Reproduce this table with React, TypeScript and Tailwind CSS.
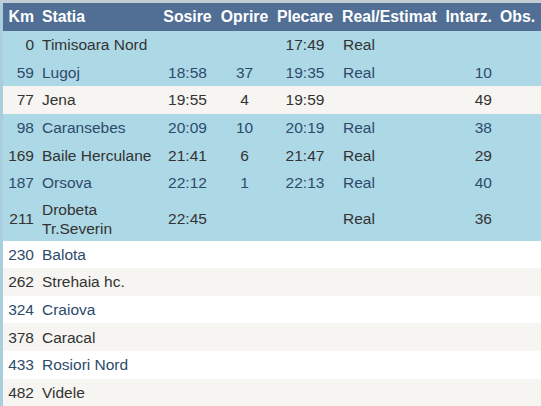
const rows = [
  { km: '0', name: 'Timisoara Nord', sosire: '', oprire: '', plecare: '17:49', real: 'Real', intarz: '', hl: true },
  { km: '59', name: 'Lugoj', sosire: '18:58', oprire: '37', plecare: '19:35', real: 'Real', intarz: '10', hl: true },
  { km: '77', name: 'Jena', sosire: '19:55', oprire: '4', plecare: '19:59', real: '', intarz: '49', hl: false },
  { km: '98', name: 'Caransebes', sosire: '20:09', oprire: '10', plecare: '20:19', real: 'Real', intarz: '38', hl: true },
  { km: '169', name: 'Baile Herculane', sosire: '21:41', oprire: '6', plecare: '21:47', real: 'Real', intarz: '29', hl: true },
  { km: '187', name: 'Orsova', sosire: '22:12', oprire: '1', plecare: '22:13', real: 'Real', intarz: '40', hl: true },
  { km: '211', name: 'Drobeta Tr.Severin', sosire: '22:45', oprire: '', plecare: '', real: 'Real', intarz: '36', hl: true },
  { km: '230', name: 'Balota', sosire: '', oprire: '', plecare: '', real: '', intarz: '', hl: false },
  { km: '262', name: 'Strehaia hc.', sosire: '', oprire: '', plecare: '', real: '', intarz: '', hl: false },
  { km: '324', name: 'Craiova', sosire: '', oprire: '', plecare: '', real: '', intarz: '', hl: false },
  { km: '378', name: 'Caracal', sosire: '', oprire: '', plecare: '', real: '', intarz: '', hl: false },
  { km: '433', name: 'Rosiori Nord', sosire: '', oprire: '', plecare: '', real: '', intarz: '', hl: false },
  { km: '482', name: 'Videle', sosire: '', oprire: '', plecare: '', real: '', intarz: '', hl: false },
];

export default function App() {
  return (
    <div className="h-[406px] w-[541px] overflow-hidden bg-white font-['Liberation_Sans',Arial,sans-serif]">
      <div className="h-[3px] bg-[#c3ccd5]" />
      <div className="border-l-[3px] border-[#a9cfdf]">
        <table className="w-[538px] table-fixed border-collapse">
          <colgroup>
            <col className="w-[35px]" />
            <col className="w-[120px]" />
            <col className="w-[59px]" />
            <col className="w-[55px]" />
            <col className="w-[66px]" />
            <col className="w-[104px]" />
            <col className="w-[55px]" />
            <col className="w-[44px]" />
          </colgroup>
          <thead>
            <tr className="h-[28px] bg-[#516f95] text-[15.8px] font-bold text-white">
              <th className="pr-[4px] text-right">Km</th>
              <th className="pl-[4px] text-left">Statia</th>
              <th className="text-center">Sosire</th>
              <th className="text-center">Oprire</th>
              <th className="text-center">Plecare</th>
              <th className="pl-[4px] text-left">Real/Estimat</th>
              <th className="pr-[5px] text-right">Intarz.</th>
              <th className="pl-[3px] text-left">Obs.</th>
            </tr>
          </thead>
          <tbody className="text-[15.5px] leading-[19px]">
            {rows.map((r, i) => {
              const bg = r.hl ? 'bg-[#add8e6]' : i % 2 === 0 ? 'bg-[#f6f5f1]' : 'bg-white';
              const color = i % 2 === 0 ? 'text-[#333333]' : 'text-[#2d4a6b]';
              return (
                <tr key={r.km} className={`${bg} ${color} ${r.name.length > 16 ? 'h-[44px]' : 'h-[27.6px]'}`}>
                  <td className="pr-[4px] text-right">{r.km}</td>
                  <td className="pl-[4px] pr-[4px] text-left">{r.name}</td>
                  <td className="text-center">{r.sosire}</td>
                  <td className="text-center">{r.oprire}</td>
                  <td className="text-center">{r.plecare}</td>
                  <td className="pl-[5px] text-left">{r.real}</td>
                  <td className="pr-[5px] text-right">{r.intarz}</td>
                  <td />
                </tr>
              );
            })}
          </tbody>
        </table>
      </div>
    </div>
  );
}
